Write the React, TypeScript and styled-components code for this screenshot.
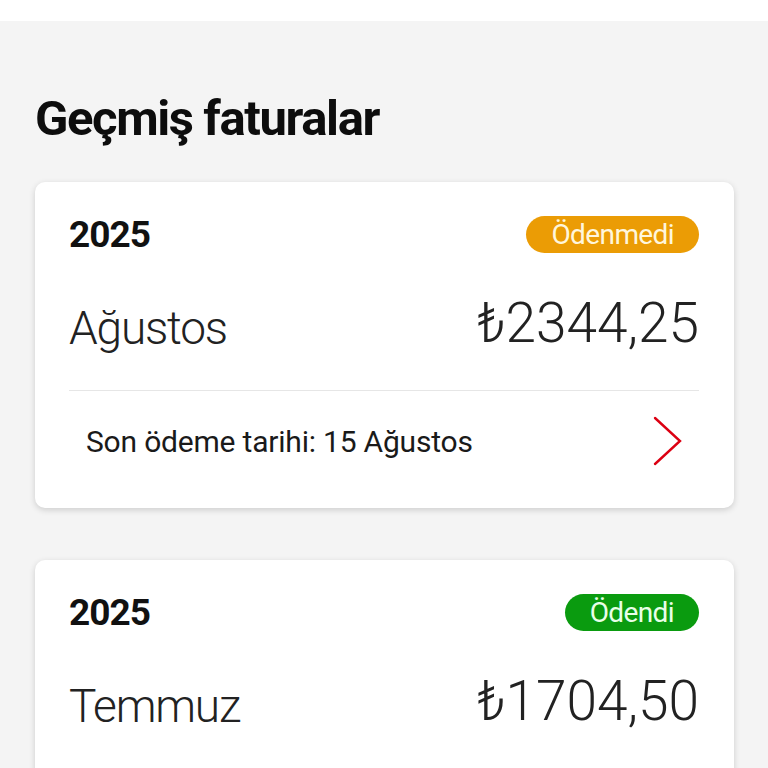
import React from "react";
import styled, { createGlobalStyle } from "styled-components";

const Global = createGlobalStyle`
  html, body { margin: 0; padding: 0; background: #f4f4f4; }
  body { font-family: Roboto, "Noto Sans", sans-serif; color: #111; }
`;

const TopBar = styled.div`
  height: 21px;
  background: #ffffff;
`;

const Content = styled.main`
  padding: 0 34px 0 35px;
  display: flex;
  flex-direction: column;
`;

const Title = styled.h1`
  margin: 70px 0 0 0;
  font-size: 49px;
  line-height: 56px;
  font-weight: 700;
  letter-spacing: -1.4px;
  color: #0d0d0d;
`;

const CardList = styled.div`
  display: flex;
  flex-direction: column;
  gap: 52px;
  margin-top: 35px;
`;

const Card = styled.section`
  background: #ffffff;
  border-radius: 10px;
  box-shadow: 0 2px 6px rgba(0, 0, 0, 0.16);
  padding: 34px 35px 0 34px;
  display: flex;
  flex-direction: column;
`;

const HeaderRow = styled.div`
  display: flex;
  justify-content: space-between;
  align-items: center;
  height: 37px;
`;

const Year = styled.div`
  font-size: 37px;
  font-weight: 700;
  letter-spacing: -1px;
  color: #111;
`;

const Badge = styled.span<{ $tone: "warn" | "ok" }>`
  display: inline-flex;
  align-items: center;
  justify-content: center;
  height: 37px;
  padding: 0 25px;
  border-radius: 19px;
  background: ${(p) => (p.$tone === "warn" ? "#eb9c05" : "#0a9b0f")};
  color: ${(p) => (p.$tone === "warn" ? "#fff6dc" : "#e8ffe8")};
  font-size: 28px;
  font-weight: 400;
  letter-spacing: -0.6px;
`;

const AmountRow = styled.div`
  display: flex;
  justify-content: space-between;
  align-items: baseline;
  height: 137px;
  padding-top: 44px;
  box-sizing: border-box;
`;

const Month = styled.div`
  font-size: 46px;
  font-weight: 300;
  letter-spacing: -1.2px;
  line-height: 56px;
  color: #222;
`;

const Amount = styled.div`
  font-size: 55px;
  font-weight: 300;
  letter-spacing: 0;
  line-height: 56px;
  color: #222;
  position: relative;
  top: -2px;
`;

const Divider = styled.hr`
  border: 0;
  border-top: 1px solid #e6e6e6;
  margin: 0;
`;

const FooterRow = styled.div`
  display: flex;
  justify-content: space-between;
  align-items: center;
  padding: 25px 16px 42px 17px;
`;

const DueText = styled.span`
  font-size: 30px;
  font-weight: 400;
  letter-spacing: -0.2px;
  color: #1a1a1a;
`;

const Chevron = () => (
  <svg width="30" height="50" viewBox="0 0 30 50" fill="none">
    <path d="M2 2 L27 25 L2 48" stroke="#dc0012" strokeWidth="2.4" strokeLinecap="round" strokeLinejoin="miter" />
  </svg>
);

type Bill = {
  year: string;
  status: string;
  tone: "warn" | "ok";
  month: string;
  amount: string;
  due?: string;
};

const bills: Bill[] = [
  { year: "2025", status: "Ödenmedi", tone: "warn", month: "Ağustos", amount: "₺2344,25", due: "Son ödeme tarihi: 15 Ağustos" },
  { year: "2025", status: "Ödendi", tone: "ok", month: "Temmuz", amount: "₺1704,50", due: "Ödeme tarihi: 12 Temmuz" },
];

export default function App() {
  return (
    <>
      <Global />
      <TopBar />
      <Content>
        <Title>Geçmiş faturalar</Title>
        <CardList>
          {bills.map((b, i) => (
            <Card key={i}>
              <HeaderRow>
                <Year>{b.year}</Year>
                <Badge $tone={b.tone}>{b.status}</Badge>
              </HeaderRow>
              <AmountRow>
                <Month>{b.month}</Month>
                <Amount>{b.amount}</Amount>
              </AmountRow>
              <Divider />
              <FooterRow>
                <DueText>{b.due}</DueText>
                <Chevron />
              </FooterRow>
            </Card>
          ))}
        </CardList>
      </Content>
    </>
  );
}
